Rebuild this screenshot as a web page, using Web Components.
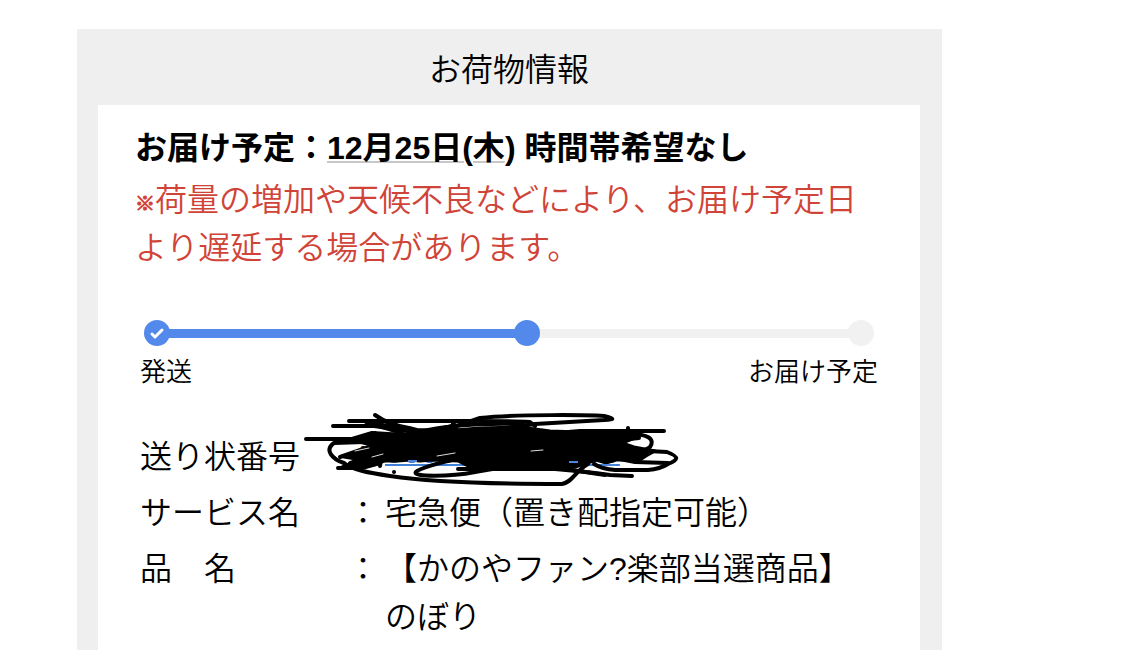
<!DOCTYPE html>
<html lang="ja">
<head>
<meta charset="utf-8">
<meta name="viewport" content="width=device-width, initial-scale=1">
<title>お荷物情報</title>
<style>
  body {
    margin: 0;
    padding: 29px 183px 0 77px;
    background: #fff;
    color: #000;
    font: 350 32px/48px "Liberation Sans", "Noto Sans CJK JP", sans-serif;
  }
  .mark { font-size: 20px; line-height: 20px; -webkit-text-stroke: 1px currentColor; }
</style>
</head>
<body>
<parcel-card>
  <span slot="title">お荷物情報</span>
  <delivery-notice>
    <span slot="label">お届け予定：</span>
    <span slot="date">12月25日(木</span>
    <span slot="time">) 時間帯希望なし</span>
    <span slot="note"><span class="mark">※</span><span>荷量の増加や天候不良などにより、お届け予定日</span><span>より遅延する場合があります。</span></span>
  </delivery-notice>
  <delivery-progress>
    <span slot="from">発送</span>
    <span slot="to">お届け予定</span>
  </delivery-progress>
  <parcel-details></parcel-details>
</parcel-card>

<script>
const attach = (el, html) => { el.attachShadow({ mode: 'open' }).innerHTML = html; };

customElements.define('parcel-card', class extends HTMLElement {
  constructor() {
    super();
    attach(this, `
      <style>
        :host { display: block; background: #efefef; padding: 0 22px 0 21px; }
        h1 { margin: 0; padding: 17px 0 11px; font-size: 32px; font-weight: inherit; line-height: 48px; text-align: center; }
        main { display: block; background: #fff; padding: 19px 35px 20px 37px; }
      </style>
      <h1><slot name="title"></slot></h1>
      <main><slot></slot></main>`);
  }
});

customElements.define('delivery-notice', class extends HTMLElement {
  constructor() {
    super();
    attach(this, `
      <style>
        :host { display: block; }
        h2 { margin: 0 0 4px; font-size: 32px; font-weight: 700; line-height: 48px; }
        .date { text-decoration: underline #c8c8c8 2px; text-underline-offset: 2px; }
        p { margin: 0; color: #d04438; }
      </style>
      <h2><slot name="label"></slot><span class="date"><slot name="date"></slot></span><slot name="time"></slot></h2>
      <p><slot name="note"></slot></p>`);
  }
});

customElements.define('delivery-progress', class extends HTMLElement {
  constructor() {
    super();
    attach(this, `
      <style>
        :host { display: block; margin: 48px 7px 0 5px; font-size: 26px; line-height: 32px; }
        .track { display: flex; align-items: center; padding: 0 4px; }
        .dot { flex: none; position: relative; width: 26px; height: 26px; border-radius: 50%; background: #f1f1f1; }
        .bar { flex: 308 1 0; height: 9px; margin: 0 -1px; background: #f1f1f1; }
        .done { background: #5389ea; }
        .bar.done { flex-grow: 343; }
        svg { display: block; }
        .names { display: flex; justify-content: space-between; margin-top: 10px; }
      </style>
      <div class="track">
        <div class="dot done"><svg viewBox="0 0 26 26" width="26" height="26" aria-hidden="true"><path d="M8 14l3 3 7-7" fill="none" stroke="#fff" stroke-width="3" stroke-linecap="round" stroke-linejoin="round"/></svg></div>
        <div class="bar done"></div>
        <div class="dot done"></div>
        <div class="bar"></div>
        <div class="dot"></div>
      </div>
      <div class="names"><slot name="from"></slot><slot name="to"></slot></div>`);
  }
});

customElements.define('ink-scribble', class extends HTMLElement {
  constructor() {
    super();
    attach(this, `
      <style>
        :host { display: block; position: absolute; pointer-events: none; }
        svg { display: block; }
      </style>
      <svg viewBox="300 410 380 80" width="380" height="80" fill="none" stroke="#000" stroke-width="4" stroke-linecap="round" stroke-linejoin="round" aria-hidden="true">
        <path fill="#000" stroke-width="3" d="M352 440L372 435 400 434 430 432 480 428 520 427 550 431 610 433 640 436 622 443 634 447 655 451 646 456 640 460 616 460 606 463 596 460 585 464 575 467 470 467 458 461 432 460 420 461 410 460 398 461 385 461 374 464 342 467 362 460 344 457 362 451 378 447Z"/>
        <path d="M349 421H470Q510 421 530 422L535 426"/>
        <path d="M333 426H374Q400 430 440 434"/>
        <path d="M375 415Q389 425 409 428L432 434M366 422L402 433M376 424L415 430 475 432"/>
        <path d="M306 439H352L372 433 420 436 445 430 480 418C520 414 590 415 604 416C616 419 614 420 604 420L535 424 500 429 460 431"/>
        <path d="M418 432Q460 422 523 424M453 424L459 433M430 432L455 425"/>
        <path d="M375 433L383 450 380 466M340 457L372 446 395 442M350 463L385 450"/>
        <path d="M364 442L334 443C324 450 332 459 344 463C352 470 370 473 390 476C430 482 500 484 562 484C573 482 574 472 588 464"/>
        <path d="M338 468H362L380 463"/>
        <path d="M465 457Q420 467 416 472C411 477 450 477 475 472L510 466 560 465"/>
        <path d="M458 469H555Q590 472 610 475L632 476"/>
        <path d="M545 434L580 431 664 431"/>
        <path d="M600 444L628 440M610 441L639 438"/>
        <path d="M628 428V435M625 434C650 433 655 440 650 447Q645 451 635 451"/>
        <path d="M590 446L630 450 667 452C680 457 678 460 668 464Q660 469 648 470H615Q602 469 594 464"/>
        <path d="M605 456L635 462 668 463M560 468L585 472 605 475"/>
        <circle cx="394" cy="472" r="2" stroke="none" fill="#000"/>
        <path stroke="#ddd" stroke-width="1" d="M355 451L369 448M372 457L383 454M437 456L455 453M531 451L543 450"/>
        <path stroke="#4a86dc" stroke-width="2" stroke-linecap="butt" d="M408 461H417M569 462H578M602 465H616"/>
      </svg>`);
  }
});

customElements.define('parcel-details', class extends HTMLElement {
  constructor() {
    super();
    attach(this, `
      <style>
        :host { display: block; position: relative; margin: 45px 7px 0 5px; }
        table { width: 100%; border-collapse: collapse; table-layout: fixed; }
        .name { width: 207px; }
        .colon { width: 38px; }
        th, td { padding: 0 0 8px; font-weight: inherit; text-align: left; vertical-align: top; }
        a { display: block; line-height: 38px; color: #3f7fd6; text-decoration-thickness: 2px; text-underline-offset: 1px; text-decoration-skip-ink: none; }
        ink-scribble { top: -23px; left: 160px; }
      </style>
      <table>
        <colgroup><col class="name"><col class="colon"><col></colgroup>
        <tr><th scope="row">送り状番号</th><td>：</td><td><a href="#tracking">0000-0000-0000</a></td></tr>
        <tr><th scope="row">サービス名</th><td>：</td><td>宅急便（置き配指定可能）</td></tr>
        <tr><th scope="row">品　名</th><td>：</td><td>【かのやファン?楽部当選商品】のぼり</td></tr>
      </table>
      <ink-scribble></ink-scribble>`);
  }
});
</script>
</body>
</html>
